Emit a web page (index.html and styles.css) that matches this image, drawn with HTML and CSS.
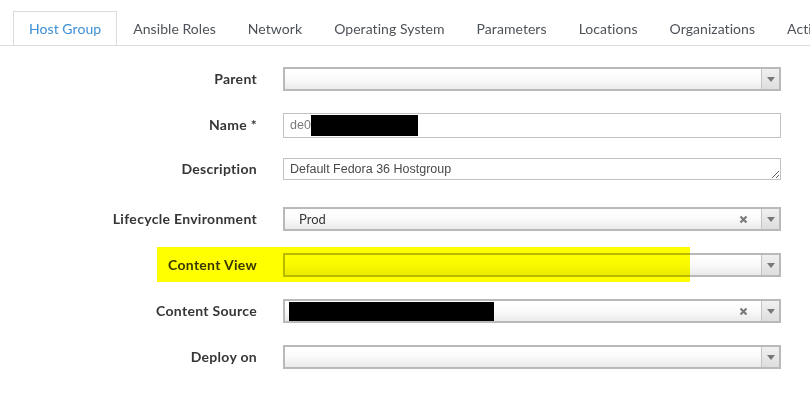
FILE: index.html
```html
<!DOCTYPE html>
<html>
<head>
<meta charset="utf-8">
<link rel="stylesheet" href="styles.css">
</head>
<body>
<ul class="tabs">
  <li class="tab active">Host Group</li>
  <li class="tab">Ansible Roles</li>
  <li class="tab">Network</li>
  <li class="tab">Operating System</li>
  <li class="tab">Parameters</li>
  <li class="tab">Locations</li>
  <li class="tab">Organizations</li>
  <li class="tab">Activation Keys</li>
</ul>
<form class="form">
  <div class="row">
    <label class="label">Parent</label>
    <div class="select"><span class="value"></span><span class="arrow"></span></div>
  </div>
  <div class="row">
    <label class="label">Name *</label>
    <div class="input"><span class="muted">de0</span><span class="redact redact-name"></span></div>
  </div>
  <div class="row row-text">
    <label class="label">Description</label>
    <textarea class="textarea">Default Fedora 36 Hostgroup</textarea>
  </div>
  <div class="row">
    <label class="label">Lifecycle Environment</label>
    <div class="select"><span class="value value-indent">Prod</span><span class="clear"><svg width="9" height="9" viewBox="0 0 9 9"><path d="M1.5 1.5L7.5 7.5M7.5 1.5L1.5 7.5" stroke="#7a7a7a" stroke-width="2.2"/></svg></span><span class="arrow"></span></div>
  </div>
  <div class="row row-highlight">
    <label class="label">Content View</label>
    <div class="select"><span class="value"></span><span class="arrow"></span></div>
    <div class="highlight"></div>
  </div>
  <div class="row">
    <label class="label">Content Source</label>
    <div class="select"><span class="value"><span class="redact redact-source"></span></span><span class="clear"><svg width="9" height="9" viewBox="0 0 9 9"><path d="M1.5 1.5L7.5 7.5M7.5 1.5L1.5 7.5" stroke="#7a7a7a" stroke-width="2.2"/></svg></span><span class="arrow"></span></div>
  </div>
  <div class="row">
    <label class="label">Deploy on</label>
    <div class="select"><span class="value"></span><span class="arrow"></span></div>
  </div>
</form>
</body>
</html>
```
FILE: styles.css
```css
html, body {
  margin: 0;
  padding: 0;
  background: #fff;
  font-family: Lato, "Open Sans", sans-serif;
  overflow: hidden;
}
.tabs {
  list-style: none;
  margin: 0;
  padding: 11px 0 0 13px;
  display: flex;
  white-space: nowrap;
  overflow: hidden;
  border-bottom: 1px solid #dcdcdc;
  height: 34px;
}
.tab {
  flex: none;
  height: 34px;
  line-height: 33px;
  padding: 0 15px;
  border: 1px solid transparent;
  border-bottom: none;
  font-size: 14px;
  letter-spacing: 0.06px;
  color: #4d5258;
  box-sizing: border-box;
}
.tab.active {
  border-color: #dcdcdc;
  background: #fff;
  height: 35px;
  color: #3b8fd6;
}
.form {
  margin: 10px 0 0 0;
  display: flex;
  flex-direction: column;
}
.row {
  height: 46px;
  display: flex;
  align-items: center;
}
.row-text {
  height: 48px;
  align-items: flex-start;
}
.row-highlight {
  position: relative;
}
.label {
  width: 257px;
  text-align: right;
  font-size: 14px;
  font-weight: bold;
  letter-spacing: 0.3px;
  color: #363636;
  margin-right: 26px;
  margin-top: -1px;
  flex: none;
}
.row-text .label {
  margin-top: 12px;
}
.select {
  width: 498px;
  height: 24px;
  box-sizing: border-box;
  border: 2px solid #b9b9b9;
  background: linear-gradient(#ffffff 0%, #fafafa 50%, #ebebeb 100%);
  display: flex;
  align-items: center;
}
.value {
  flex: 1;
  font-size: 13px;
  color: #363636;
  padding-left: 4px;
  display: flex;
  align-items: center;
}
.value-indent {
  padding-left: 14px;
}
.clear {
  width: 22px;
  display: flex;
  align-items: center;
  justify-content: flex-start;
}
.arrow {
  width: 17px;
  height: 20px;
  border-left: 1px solid #c4c4c4;
  background: linear-gradient(#f0f0f0, #dedede);
  position: relative;
}
.arrow::after {
  content: "";
  position: absolute;
  left: 5px;
  top: 8px;
  border-left: 4px solid transparent;
  border-right: 4px solid transparent;
  border-top: 5px solid #777;
}
.input {
  width: 498px;
  height: 25px;
  box-sizing: border-box;
  border: 1px solid #c2c2c2;
  background: #fff;
  display: flex;
  align-items: center;
  padding-left: 6px;
}
.muted {
  font-family: "Liberation Sans", Arial, sans-serif;
  font-size: 12.5px;
  color: #7a7a7a;
}
.redact {
  display: inline-block;
  background: #000;
}
.redact-name {
  width: 107px;
  height: 21px;
}
.redact-source {
  width: 205px;
  height: 19px;
}
.textarea {
  width: 498px;
  height: 22px;
  box-sizing: border-box;
  margin: 10px 0 0 0;
  border: 1px solid #c2c2c2;
  padding: 3px 6px;
  font-family: "Liberation Sans", Arial, sans-serif;
  font-size: 12.5px;
  line-height: 14px;
  color: #4a4a4a;
  resize: vertical;
  overflow: hidden;
}
.highlight {
  position: absolute;
  left: 157px;
  top: 5px;
  width: 533px;
  height: 35px;
  background: #ffff00;
  mix-blend-mode: multiply;
}
```
